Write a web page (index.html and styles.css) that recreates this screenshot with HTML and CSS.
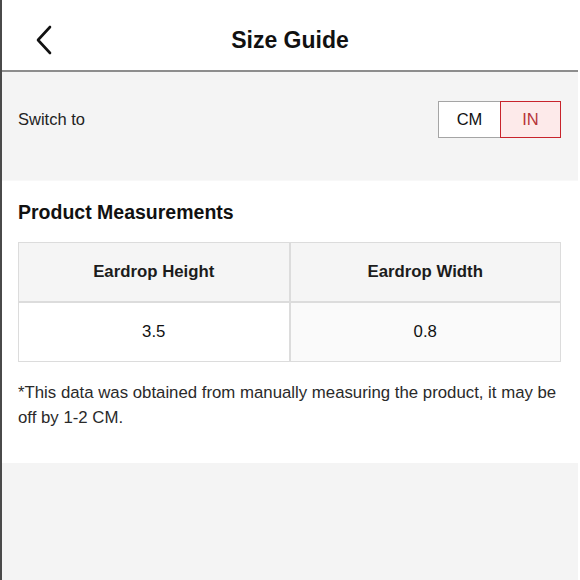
FILE: index.html
```html
<!DOCTYPE html>
<html>
<head>
<meta charset="utf-8">
<link rel="stylesheet" href="styles.css">
</head>
<body>
<div class="page">
  <header class="topbar">
    <span class="back">
      <svg width="18" height="30" viewBox="0 0 18 30"><path d="M15 2 L3 15 L15 28" fill="none" stroke="#111" stroke-width="2.6" stroke-linecap="round" stroke-linejoin="round"/></svg>
    </span>
    <h1 class="title">Size Guide</h1>
  </header>
  <section class="switch">
    <span class="switch-label">Switch to</span>
    <div class="toggle">
      <span class="opt">CM</span>
      <span class="opt active">IN</span>
    </div>
  </section>
  <section class="measure">
    <h2 class="heading">Product Measurements</h2>
    <table class="table">
      <tr><th>Eardrop Height</th><th>Eardrop Width</th></tr>
      <tr><td>3.5</td><td class="alt">0.8</td></tr>
    </table>
    <p class="note">*This data was obtained from manually measuring the product, it may be off by 1-2 CM.</p>
  </section>
  <div class="rest"></div>
</div>
</body>
</html>
```
FILE: styles.css
```css
html, body { margin: 0; padding: 0; background: #fff; }
body { font-family: "Liberation Sans", Arial, sans-serif; color: #111; }
.page {
  width: 576px;
  height: 580px;
  border-left: 2px solid #4a4a4a;
  display: flex;
  flex-direction: column;
  background: #f4f4f4;
}
.topbar {
  height: 72px;
  box-sizing: border-box;
  padding-top: 10px;
  background: #fff;
  border-bottom: 2px solid #8d8d8d;
  display: flex;
  align-items: center;
  justify-content: center;
  position: relative;
}
.back { position: absolute; left: 33px; top: 25px; display: block; line-height: 0; }
.title { margin: 0; font-size: 23px; line-height: 28px; font-weight: bold; color: #111; }
.switch {
  display: flex;
  align-items: center;
  justify-content: space-between;
  padding: 29px 17px 42px 16px;
  background: #f4f4f4;
  border-bottom: 1px solid #f8f8f8;
}
.switch-label { font-size: 16.5px; color: #222; }
.toggle { display: flex; height: 37px; }
.opt {
  display: flex; align-items: center; justify-content: center;
  font-size: 16.5px; box-sizing: border-box; height: 37px;
  background: #fff; border: 1px solid #a5a5a5; color: #111;
}
.opt:first-child { width: 62px; border-right: none; }
.opt.active { width: 61px; background: #fdeaea; border: 1.5px solid #c8242c; color: #b7353a; }
.measure {
  background: #fff;
  padding: 19px 17px 33px 16px;
}
.heading { margin: 0; font-size: 19.5px; line-height: 24px; font-weight: bold; color: #111; }
.table {
  margin-top: 18px;
  width: 543px;
  border-collapse: separate;
  border-spacing: 0;
}
.table th, .table td {
  border: 1px solid #dcdcdc;
  height: 58px;
  padding: 0;
  text-align: center;
  font-size: 16.8px;
  width: 50%;
}
.table th { background: #f5f5f5; font-weight: bold; color: #1c1c1c; }
.table td { background: #fff; color: #111; }
.table td.alt { background: #fafafa; }
.note { margin: 18px 0 0; font-size: 16.8px; line-height: 25px; color: #2a2a2a; }
.rest { flex: 1; background: #f4f4f4; }
```
